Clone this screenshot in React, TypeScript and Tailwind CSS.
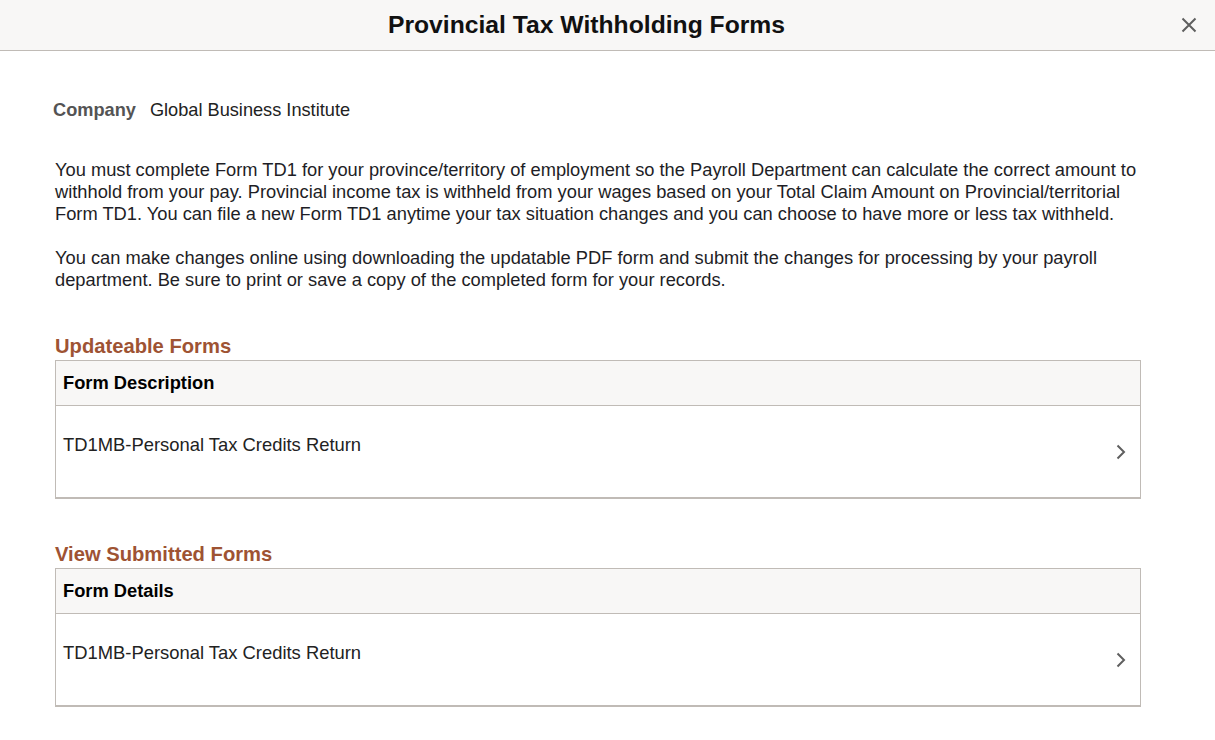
import React from "react";

const ChevronRight = () => (
  <svg width="10" height="16" viewBox="0 0 10 16" fill="none">
    <path d="M1.5 1.5 L8 8 L1.5 14.5" stroke="#5f5f5f" strokeWidth="2" />
  </svg>
);

const CloseIcon = () => (
  <svg width="16" height="16" viewBox="0 0 16 16" fill="none">
    <path d="M1.5 1.5 L14.5 14.5 M14.5 1.5 L1.5 14.5" stroke="#5f5f5f" strokeWidth="2" />
  </svg>
);

const FormGrid = ({ title, column, rowText }: { title: string; column: string; rowText: string }) => (
  <section>
    <h2 className="text-[20.2px] leading-[24px] pb-[2px] font-bold text-[#9e5333]">{title}</h2>
    <div className="border border-[#c0bbb6] border-b-2 bg-white">
      <div className="h-[45px] flex items-center px-[7px] bg-[#f8f7f6] border-b border-[#c0bbb6] text-[18.3px] font-bold text-black">
        {column}
      </div>
      <div className="h-[91px] flex justify-between px-[7px] pt-[28px] text-[18.4px] text-[#222]">
        <span className="leading-[22px]">{rowText}</span>
        <span className="mt-[10px] mr-[7px]">
          <ChevronRight />
        </span>
      </div>
    </div>
  </section>
);

export default function App() {
  return (
    <div className="w-[1215px] h-[740px] bg-white overflow-hidden" style={{ fontFamily: '"Liberation Sans", Arial, sans-serif' }}>
      <header className="relative h-[51px] flex items-center justify-center pr-[42px] bg-[#f8f7f6] border-b border-[#c0bbb6]">
        <h1 className="text-[24.7px] font-bold text-[#111]">Provincial Tax Withholding Forms</h1>
        <button className="absolute right-[18px] top-[17px]">
          <CloseIcon />
        </button>
      </header>

      <main className="pl-[55px] w-[1141px]">
        <div className="flex items-center mt-[48px] h-[24px] text-[18.2px]">
          <span className="font-bold text-[#545454] ml-[-2px]">Company</span>
          <span className="ml-[14px] text-[#222]">Global Business Institute</span>
        </div>

        <div className="mt-[36px] w-[1096px] text-[18.3px] leading-[22px] text-[#1e1e26]">
          <p>
            You must complete Form TD1 for your province/territory of employment so the Payroll Department can calculate the correct amount to withhold from your pay. Provincial income tax is withheld from your wages based on your Total Claim Amount on Provincial/territorial Form TD1. You can file a new Form TD1 anytime your tax situation changes and you can choose to have more or less tax withheld.
          </p>
          <p className="mt-[22px]">
            You can make changes online using downloading the updatable PDF form and submit the changes for processing by your payroll department. Be sure to print or save a copy of the completed form for your records.
          </p>
        </div>

        <div className="mt-[43px] flex flex-col gap-[43px]">
          <FormGrid title="Updateable Forms" column="Form Description" rowText="TD1MB-Personal Tax Credits Return" />
          <FormGrid title="View Submitted Forms" column="Form Details" rowText="TD1MB-Personal Tax Credits Return" />
        </div>
      </main>
    </div>
  );
}
